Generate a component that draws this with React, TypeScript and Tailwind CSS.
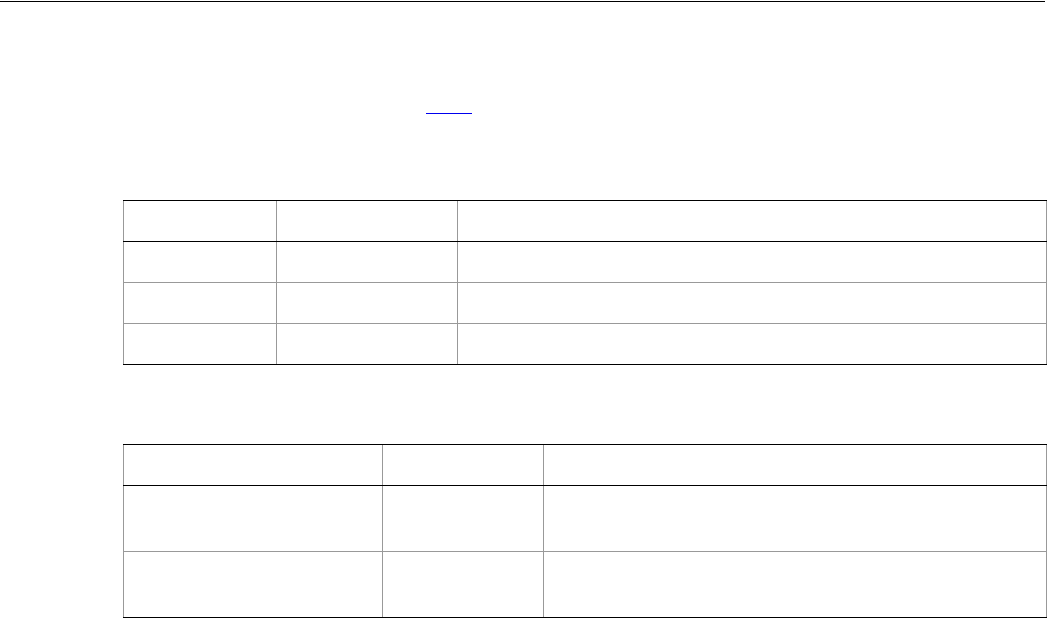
const firstTable = {
	cols: ["w-[153px]", "w-[181px]", "w-[590px]"],
	rows: ["h-[41px]", "h-[41px]", "h-[41px]"],
};

const secondTable = {
	cols: ["w-[259px]", "w-[161px]", "w-[504px]"],
	rows: ["h-[66px]", "h-[66px]"],
};

function Row({ cols, height, last, header }: { cols: string[]; height: string; last: boolean; header?: boolean }) {
	const bottom = header || last ? "border-b-black" : "border-b-[#999999]";
	return (
		<div className={`flex border-b ${bottom} ${height}`}>
			{cols.map((w, i) => (
				<div
					key={i}
					className={`${w} h-full border-l border-l-[#999999] ${i === cols.length - 1 ? "border-r border-r-[#999999]" : ""}`}
				/>
			))}
		</div>
	);
}

function Table({ cols, rows, className }: { cols: string[]; rows: string[]; className: string }) {
	return (
		<div className={`ml-[123px] w-[924px] border-t border-t-black ${className}`}>
			<Row cols={cols} height="h-[41px]" last={false} header />
			{rows.map((h, i) => (
				<Row key={i} cols={cols} height={h} last={i === rows.length - 1} />
			))}
		</div>
	);
}

export default function App() {
	return (
		<div className="w-[1048px] h-[618px] overflow-hidden bg-white flex flex-col font-['Liberation_Sans',sans-serif]">
			<div className="mt-px h-px w-[1045px] bg-black" />
			<div className="mt-[111px] ml-[426px] h-px w-[46px] bg-[#0000ee]" />
			<Table cols={firstTable.cols} rows={firstTable.rows} className="mt-[86px]" />
			<Table cols={secondTable.cols} rows={secondTable.rows} className="mt-[79px]" />
		</div>
	);
}
